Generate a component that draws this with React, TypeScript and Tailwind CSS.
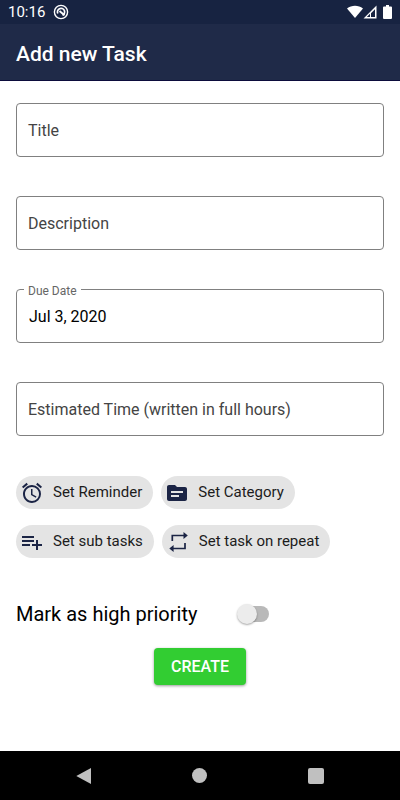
import * as React from "react";
import { clsx } from "clsx";
import { MdAlarm, MdTopic } from "react-icons/md";

interface TextFieldProps {
  id: string;
  label: string;
  defaultValue?: string;
}

/** Outlined field, the label floats into the border once there is a value */
function TextField({ id, label, defaultValue = "" }: TextFieldProps) {
  const [value, setValue] = React.useState(defaultValue);
  const floating = value !== "";

  return (
    <div className="relative">
      <input
        id={id}
        type="text"
        value={value}
        onChange={(e) => setValue(e.target.value)}
        className="block h-[54px] w-full rounded border border-[#808080] bg-white px-3 text-base text-black outline-none focus:border-[#1f2a48]"
      />
      <label
        htmlFor={id}
        className={clsx(
          "pointer-events-none absolute bg-white px-1",
          floating
            ? "-top-2 left-2 text-xs leading-5 text-[#666666]"
            : "top-4 left-2 text-base leading-6 text-[#444444]"
        )}
      >
        {label}
      </label>
    </div>
  );
}

interface ChipProps {
  icon: React.ReactNode;
  children: React.ReactNode;
}

function Chip({ icon, children }: ChipProps) {
  return (
    <button
      type="button"
      className="flex h-[33px] items-center gap-[9px] rounded-full bg-[#e4e4e4] pr-[11px] pl-1 text-[15px] text-[#1c1c1c]"
    >
      <span className="text-[#1b2445]">{icon}</span>
      {children}
    </button>
  );
}

function PlaylistAddIcon() {
  return (
    <svg viewBox="0 0 24 24" className="size-6" fill="currentColor" aria-hidden="true">
      <path d="M14 10H2v2h12v-2zm0-4H2v2h12V6zm4 8v-4h-2v4h-4v2h4v4h2v-4h4v-2h-4zM2 16h8v-2H2v2z" />
    </svg>
  );
}

function RepeatIcon() {
  return (
    <svg viewBox="0 0 24 24" className="size-6" aria-hidden="true">
      <path
        d="M6.300 11V5.500H18M19 13v5.500H7"
        fill="none"
        stroke="currentColor"
        strokeWidth="1.700"
      />
      <path d="M17.500 2l4.300 3.500-4.300 3.500zM7.600 15L3.300 18.500l4.300 3.500z" fill="currentColor" />
    </svg>
  );
}

function StatusBar() {
  return (
    <div className="flex h-6 items-center bg-[#172341] px-2 text-white">
      <span className="text-[15px] leading-6">10:16</span>
      <svg viewBox="0 0 16 16" className="ml-2 size-4" fill="none" stroke="currentColor" aria-hidden="true">
        <circle cx="8" cy="8" r="6.600" strokeWidth="1.400" />
        <path d="M4.800 9.500A3.600 3.600 0 1 1 9.500 11.200" strokeWidth="1.700" />
        <path d="M6.500 7l5 4.200" strokeWidth="1.900" />
      </svg>
      <div className="ml-auto flex items-center">
        <svg viewBox="0 0 16 14" className="h-3.5 w-4" fill="currentColor" aria-hidden="true">
          <path d="M0 3.500C4.500-.2 11.500-.2 16 3.500L8 13z" />
        </svg>
        <svg viewBox="0 0 14 14" className="h-3.5 w-3.5" aria-hidden="true">
          <path d="M.5 13.500h13V.5zM8 12V8.200L12 4.200V12z" fill="currentColor" fillRule="evenodd" />
          <path d="M3.800 12L7 8.800V12z" fill="#172341" />
        </svg>
        <svg viewBox="0 0 9 14" className="ml-1.5 h-3.5 w-[9px]" fill="currentColor" aria-hidden="true">
          <path d="M3 0h3v1.500h2Q9 1.500 9 2.500V13Q9 14 8 14H1Q0 14 0 13V2.500Q0 1.500 1 1.500h2z" />
        </svg>
      </div>
    </div>
  );
}

function NavigationBar() {
  return (
    <nav className="flex h-[49px] items-center justify-around bg-black px-[26px] text-[#c0c0c0]">
      <button type="button" aria-label="Back">
        <svg viewBox="0 0 16 18" className="h-[18px] w-4" fill="currentColor">
          <path d="M15 1v16L.3 9z" />
        </svg>
      </button>
      <button type="button" aria-label="Home" className="size-[15px] rounded-full bg-[#c0c0c0]" />
      <button type="button" aria-label="Recent apps" className="size-4 rounded-xs bg-[#c0c0c0]" />
    </nav>
  );
}

export default function App() {
  return (
    <div className="flex min-h-screen flex-col bg-white font-[Roboto,sans-serif]">
      <header className="bg-[#1f2a48]">
        <StatusBar />
        <h1 className="flex h-[57px] items-center border-b border-[#0c0c3c] px-4 pt-1.5 text-[21px] font-medium text-white">
          Add new Task
        </h1>
      </header>

      <main className="flex-1">
        <form className="px-4 pt-[22px]" onSubmit={(e) => e.preventDefault()}>
          <div className="flex flex-col gap-[39px]">
            <TextField id="title" label="Title" />
            <TextField id="description" label="Description" />
            <TextField id="due-date" label="Due Date" defaultValue="Jul 3, 2020" />
            <TextField id="estimate" label="Estimated Time (written in full hours)" />
          </div>

          <div className="mt-10 flex flex-col gap-4">
            <div className="flex gap-2">
              <Chip icon={<MdAlarm className="size-6" />}>Set Reminder</Chip>
              <Chip icon={<MdTopic className="size-6" />}>Set Category</Chip>
            </div>
            <div className="flex gap-2">
              <Chip icon={<PlaylistAddIcon />}>Set sub tasks</Chip>
              <Chip icon={<RepeatIcon />}>Set task on repeat</Chip>
            </div>
          </div>

          <label className="mt-10 flex h-8 w-fit items-center gap-10 text-xl text-black">
            Mark as high priority
            <span className="relative flex h-6 w-9 items-center">
              <input type="checkbox" role="switch" className="peer sr-only" />
              <span className="ml-1 h-4 w-7 rounded-full bg-[#b9b9b9] peer-checked:bg-[#90d890]" />
              <span className="absolute left-0 size-5 rounded-full bg-[#ececec] shadow-[0_1px_2px_rgba(0,0,0,0.35)] peer-checked:left-4" />
            </span>
          </label>

          <button
            type="submit"
            className="mx-auto mt-[18px] block h-[37px] rounded bg-[#32cd32] px-[17px] text-base font-medium text-white shadow-[0_1px_3px_rgba(0,0,0,0.4)]"
          >
            CREATE
          </button>
        </form>
      </main>

      <NavigationBar />
    </div>
  );
}
